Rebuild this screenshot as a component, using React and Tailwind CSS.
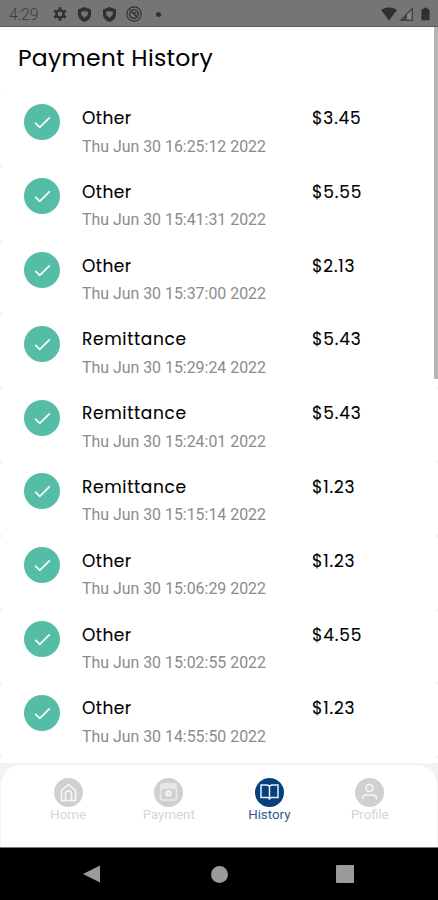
import React, { useState } from 'react';

const payments = [
    { id: 1, type: 'Other', date: 'Thu Jun 30 16:25:12 2022', amount: '$3.45' },
    { id: 2, type: 'Other', date: 'Thu Jun 30 15:41:31 2022', amount: '$5.55' },
    { id: 3, type: 'Other', date: 'Thu Jun 30 15:37:00 2022', amount: '$2.13' },
    { id: 4, type: 'Remittance', date: 'Thu Jun 30 15:29:24 2022', amount: '$5.43' },
    { id: 5, type: 'Remittance', date: 'Thu Jun 30 15:24:01 2022', amount: '$5.43' },
    { id: 6, type: 'Remittance', date: 'Thu Jun 30 15:15:14 2022', amount: '$1.23' },
    { id: 7, type: 'Other', date: 'Thu Jun 30 15:06:29 2022', amount: '$1.23' },
    { id: 8, type: 'Other', date: 'Thu Jun 30 15:02:55 2022', amount: '$4.55' },
    { id: 9, type: 'Other', date: 'Thu Jun 30 14:55:50 2022', amount: '$1.23' },
];

const ShieldIcon = () => (
    <svg className="w-[13px] h-[15px]" viewBox="0 0 13 15">
        <path d="M6.5 0 13 2.4v4.8c0 3.6-2.7 6.6-6.5 7.8C2.7 13.8 0 10.8 0 7.2V2.4z" fill="#303030" />
        <path d="M3.2 4.5h2.3l1-.8 1 .8h2.3v3.2L6.5 11 3.2 7.7z" fill="#757575" />
    </svg>
);

const StatusBar = () => (
    <div className="h-[27px] shrink-0 flex items-center bg-[#757575] border-b border-[#5c5c5c] pl-[9px] pr-2 pt-[2px]">
        <span className="w-[44px] pt-px text-[15.8px] leading-none text-[#3c3c3c] font-light font-[Roboto,sans-serif]">4:29</span>
        <svg className="w-[14px] h-[14px]" viewBox="0 0 14 14" fill="none" stroke="#303030">
            <circle cx="7" cy="7" r="3.6" strokeWidth="2.4" />
            <path d="M7 .3v2.4M7 11.3v2.4M1.2 3.6l2.1 1.2M10.7 9.2l2.1 1.2M1.2 10.4l2.1-1.2M10.7 4.8l2.1-1.2" strokeWidth="2.8" />
        </svg>
        <div className="flex items-center gap-3 ml-[11px]">
            <ShieldIcon />
            <ShieldIcon />
        </div>
        <svg className="w-4 h-4 ml-[10px]" viewBox="0 0 16 16" fill="none" stroke="#303030">
            <circle cx="8" cy="8" r="7.2" strokeWidth="1.2" />
            <path d="M4.3 5.8a4.3 4.3 0 0 0 5.9 5.9M11.7 10.2a4.3 4.3 0 0 0-5.9-5.9" strokeWidth="1.3" />
            <path d="M4 4 12 12" strokeWidth="1.5" />
            <path d="M7.5 5.5A3 3 0 0 1 10.5 8.7z" fill="#303030" stroke="none" />
        </svg>
        <span className="w-[5px] h-[5px] rounded-full bg-[#303030] ml-[14px]" />
        <div className="flex items-center ml-auto">
            <svg className="w-4 h-[14px]" viewBox="0 0 16 14">
                <path d="M0 3C4.5-.3 11.5-.3 16 3L8 13.5z" fill="#303030" />
            </svg>
            <svg className="w-[14px] h-[14px] ml-[2px]" viewBox="0 0 14 14">
                <path d="M0 14 14 0v14z" fill="#444" />
                <path d="M8 7.7 12.6 3.2v9.4H8z" fill="#868686" />
            </svg>
            <svg className="w-[9px] h-[14px] ml-2" viewBox="0 0 10 14">
                <path d="M3 0h4v1.5h1.5l1 1V14h-9V2.5l1-1H3z" fill="#303030" />
            </svg>
        </div>
    </div>
);

const PaymentRow = ({ payment }) => (
    <div className="h-[73.8px] shrink-0 flex bg-white rounded-[4px] pl-6">
        <div className="w-9 h-9 mt-[11.4px] rounded-full bg-[#55bda6] flex items-center justify-center">
            <svg className="w-[17px] h-[13px] mt-px" viewBox="0 0 17 13" fill="none" stroke="#f2fffb" strokeWidth="1.8">
                <path d="M1.2 6.8 5.8 11.3 15.8 1.4" />
            </svg>
        </div>
        <div className="w-[230px] ml-[22px] pt-[14px]">
            <div className={`h-[22px] leading-[22px] text-[17px] text-black [-webkit-text-stroke:0.1px_black] ${payment.type === 'Other' ? 'tracking-[0.45px]' : 'tracking-[0.65px]'}`}>
                {payment.type}
            </div>
            <div className="mt-[7.5px] h-5 leading-5 text-[15.9px] text-[#8c8c8c] font-[Roboto,sans-serif] whitespace-nowrap">
                {payment.date}
            </div>
        </div>
        <div className="pt-[14px] leading-[22px] text-[17px] tracking-[0.8px] text-black [-webkit-text-stroke:0.1px_black]">
            {payment.amount}
        </div>
    </div>
);

const HomeIcon = () => (
    <g>
        <path d="M7.5 12.5 14.5 6.5l7 6v10h-14z" />
        <path d="M11.5 22.5V16a3 3 0 0 1 6 0v6.5" />
    </g>
);

const PaymentIcon = () => (
    <g>
        <path d="M6 10V7.5Q6 5 8.500 5h12Q23 5 23 7.500V10z" fill="#e6e6e6" stroke="none" />
        <rect x="6.5" y="10" width="16" height="12" rx="1.5" stroke="#e9e9e9" />
        <circle cx="14.5" cy="15.5" r="3.2" fill="#f4f4f4" stroke="none" />
        <path d="m13.7 14 2.2 1.5-2.2 1.5z" fill="#ccc" stroke="none" />
    </g>
);

const HistoryIcon = () => (
    <path d="M14.5 8.2Q13.3 7 11.5 7H6v12.5h6q1.5 0 2.5 1 1-1 2.5-1h6V7h-5.5q-1.800 0-3 1.200zv13.500" />
);

const ProfileIcon = () => (
    <g>
        <circle cx="14.5" cy="10" r="3.5" />
        <path d="M7.5 21.5v-1q0-3.500 4-3.500h6q4 0 4 3.500v1" />
    </g>
);

const tabs = [
    { name: 'Home', icon: HomeIcon },
    { name: 'Payment', icon: PaymentIcon },
    { name: 'History', icon: HistoryIcon },
    { name: 'Profile', icon: ProfileIcon },
];

function PaymentHistory() {
    const [selectedTab, setSelectedTab] = useState('History');

    return (
        <div className="relative w-full h-[900px] flex flex-col overflow-hidden bg-white font-[Poppins,Inter,sans-serif]">
            <StatusBar />

            <h1 className="h-[66px] shrink-0 pl-[18px] pt-[14px] text-[23.5px] leading-[34px] tracking-[0.25px] text-black">Payment History</h1>

            {/* Payment list */}
            <div className="h-[670px] shrink-0 flex flex-col bg-[#f3f3f3] overflow-hidden">
                {payments.map((payment) => (
                    <PaymentRow key={payment.id} payment={payment} />
                ))}
                {/* next row starts under the tab bar */}
                <div className="h-[73.8px] shrink-0 bg-white rounded-[4px]" />
            </div>

            {/* Bottom tabs */}
            <div className="h-[84px] shrink-0 bg-[#f3f3f3]">
                <div className="h-full rounded-t-[22px] bg-white border-t-2 border-x border-[#f3f3f3] flex justify-center pt-[13px]">
                    {tabs.map((tab) => {
                        const Icon = tab.icon;
                        const active = selectedTab === tab.name;
                        return (
                            <button
                                key={tab.name}
                                type="button"
                                onClick={() => setSelectedTab(tab.name)}
                                className="w-[100.6px] flex flex-col items-center"
                            >
                                <svg className="w-[29px] h-[29px]" viewBox="0 0 29 29" fill="none" stroke={active ? '#e8f0fa' : '#f8f8f8'} strokeWidth="1.5">
                                    <circle cx="14.5" cy="14.5" r="14.5" fill={active ? '#083f7d' : '#d0d0d0'} stroke="none" />
                                    <Icon />
                                </svg>
                                <span className={`text-[13.3px] leading-[16px] font-[Roboto,sans-serif] ${active ? 'text-[#335c91]' : 'text-[#d5d5d5]'}`}>
                                    {tab.name}
                                </span>
                            </button>
                        );
                    })}
                </div>
            </div>

            {/* Android navigation */}
            <div className="h-[53px] shrink-0 bg-black border-t border-[#777] flex items-center pl-[83px]">
                <svg className="w-[17px] h-[18px]" viewBox="0 0 17 18">
                    <path d="M0 9 17 .5v17z" fill="#9b9b9b" />
                </svg>
                <div className="w-[17px] h-[17px] ml-[111px] rounded-full bg-[#9b9b9b]" />
                <div className="w-[18px] h-[18px] ml-[108px] rounded-[1px] bg-[#9b9b9b]" />
            </div>

            {/* Scroll indicator */}
            <div className="absolute right-0 top-[27px] w-1 h-[352px] bg-[#b5b5b5]" />
        </div>
    );
}

export default PaymentHistory;
